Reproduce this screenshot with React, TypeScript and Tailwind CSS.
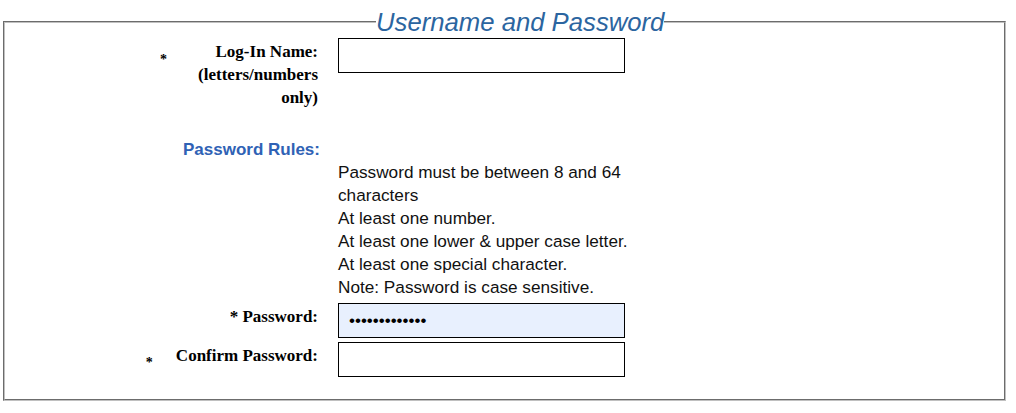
import React from "react";

const serif = { fontFamily: '"Liberation Serif", "Times New Roman", serif' };
const sans = { fontFamily: '"Liberation Sans", Arial, sans-serif' };

export default function App() {
  return (
    <div className="w-[1016px] h-[413px] bg-white pt-[7px]" style={sans}>
      <fieldset className="ml-[3px] mr-[10px] p-0 m-0 border-2 [border-style:groove] border-[#c0c0c0] pb-[22px]">
        <legend
          className="ml-[371px] px-0 text-[25.7px] leading-[30px] italic text-[#2b65a0]"
          style={sans}
        >
          Username and Password
        </legend>

        <div className="pt-[1px] flex flex-col">
          {/* Log-In Name row */}
          <div className="flex items-start">
            <div className="w-[313px] flex justify-end items-start">
              <span className="text-[14px] leading-[14px] font-bold mt-[15px] mr-[29px] text-black" style={serif}>
                *
              </span>
              <span
                className="w-[122px] mt-[2px] text-right text-[17px] leading-[23px] font-bold text-black"
                style={serif}
              >
                Log-In Name: (letters/numbers only)
              </span>
            </div>
            <div className="ml-[20px]">
              <input
                type="text"
                readOnly
                className="w-[287px] h-[35px] border border-black bg-white outline-none"
              />
            </div>
          </div>

          {/* Password Rules label */}
          <div className="flex mt-[29px]">
            <div className="w-[315px] text-right text-[17px] leading-[23px] font-bold text-[#2f62b5]" style={sans}>
              Password Rules:
            </div>
          </div>

          {/* Rules text */}
          <div className="flex">
            <div className="w-[313px]" />
            <div className="ml-[20px] w-[290px] text-[17.2px] leading-[23px] text-[#111]" style={sans}>
              <div>Password must be between 8 and 64 characters</div>
              <div>At least one number.</div>
              <div>At least one lower &amp; upper case letter.</div>
              <div>At least one special character.</div>
              <div>Note: Password is case sensitive.</div>
            </div>
          </div>

          {/* Password row */}
          <div className="flex items-start mt-[4px]">
            <div className="w-[313px] flex justify-end items-start">
              <span
                className="mt-[2px] text-right text-[17px] leading-[23px] font-bold text-black whitespace-nowrap"
                style={serif}
              >
                * Password:
              </span>
            </div>
            <div className="ml-[20px]">
              <input
                type="password"
                readOnly
                value="aaaaaaaaaaaaa"
                className="w-[287px] h-[35px] border border-black bg-[#e8f0fe] px-[10px] text-[17px] outline-none text-black"
                style={sans}
              />
            </div>
          </div>

          {/* Confirm row */}
          <div className="flex items-start mt-[4px]">
            <div className="w-[313px] flex justify-end items-start">
              <span className="text-[14px] leading-[14px] font-bold mt-[14px] mr-[23px] text-black" style={serif}>
                *
              </span>
              <span
                className="mt-[2px] text-right text-[17px] leading-[23px] font-bold text-black whitespace-nowrap"
                style={serif}
              >
                Confirm Password:
              </span>
            </div>
            <div className="ml-[20px]">
              <input
                type="text"
                readOnly
                className="w-[287px] h-[35px] border border-black bg-white outline-none"
              />
            </div>
          </div>
        </div>
      </fieldset>
    </div>
  );
}
